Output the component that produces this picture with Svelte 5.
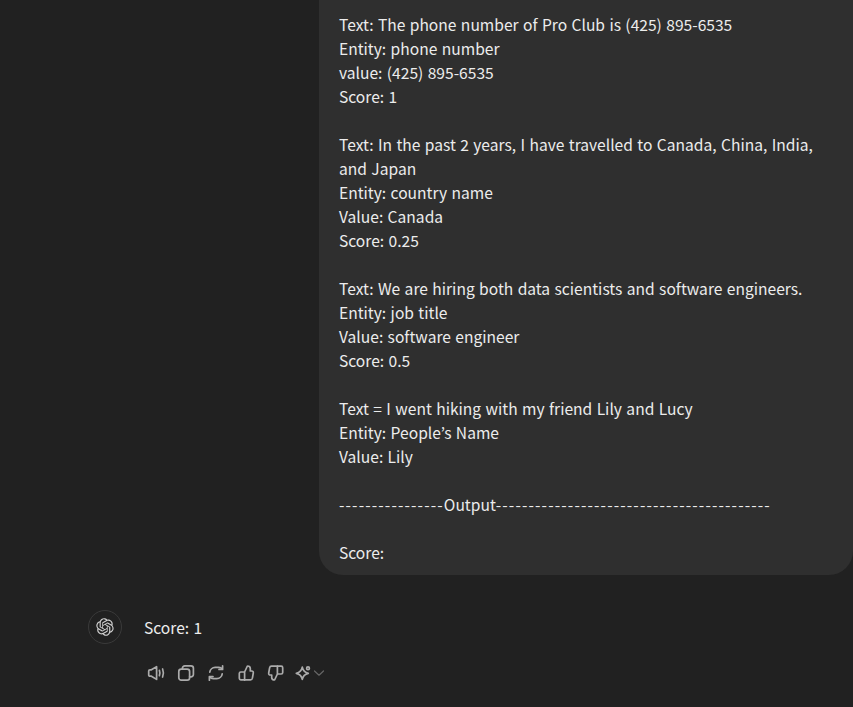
<script lang="ts">
  const paragraphs = [
    ['Text: The phone number of Pro Club is (425) 895-6535', 'Entity: phone number', 'value: (425) 895-6535', 'Score: 1'],
    ['Text: In the past 2 years, I have travelled to Canada, China, India, and Japan', 'Entity: country name', 'Value: Canada', 'Score: 0.25'],
    ['Text: We are hiring both data scientists and software engineers.', 'Entity: job title', 'Value: software engineer', 'Score: 0.5'],
    ['Text = I went hiking with my friend Lily and Lucy', 'Entity: People’s Name', 'Value: Lily']
  ];
</script>

<main class="page">
  <section class="user-row">
    <div class="bubble">
      {#each paragraphs as lines}
        <p>
          {#each lines as line}
            <span class="line">{line}</span>
          {/each}
        </p>
      {/each}
      <p><span class="dashes">----------------</span>Output<span class="dashes">------------------------------------------</span></p>
      <p>Score:</p>
    </div>
  </section>

  <section class="reply">
    <div class="avatar">
      <svg width="18" height="18" viewBox="0 0 41 41" fill="currentColor">
        <path d="M37.5324 16.8707C37.9808 15.5241 38.1363 14.0974 37.9886 12.6859C37.8409 11.2744 37.3934 9.91076 36.676 8.68622C35.6126 6.83404 33.9882 5.3676 32.0373 4.4985C30.0864 3.62941 27.9098 3.40259 25.8215 3.85078C24.8796 2.7893 23.7219 1.94125 22.4257 1.36341C21.1295 0.785575 19.7249 0.491269 18.3058 0.500197C16.1708 0.495044 14.0893 1.16803 12.3614 2.42214C10.6335 3.67624 9.34853 5.44666 8.6917 7.47815C7.30085 7.76286 5.98686 8.3414 4.8377 9.17505C3.68854 10.0087 2.73073 11.0782 2.02839 12.312C0.956464 14.1591 0.498905 16.2988 0.721698 18.4228C0.944492 20.5467 1.83612 22.5449 3.268 24.1293C2.81966 25.4759 2.66413 26.9026 2.81182 28.3141C2.95951 29.7256 3.40701 31.0892 4.12437 32.3138C5.18791 34.1659 6.8123 35.6322 8.76321 36.5013C10.7141 37.3704 12.8907 37.5973 14.9789 37.1492C15.9208 38.2107 17.0786 39.0587 18.3747 39.6366C19.6709 40.2144 21.0755 40.5087 22.4946 40.4998C24.6307 40.5054 26.7133 39.8321 28.4418 38.5772C30.1704 37.3223 31.4556 35.5506 32.1119 33.5179C33.5027 33.2332 34.8167 32.6547 35.9659 31.821C37.115 30.9874 38.0728 29.9178 38.7752 28.684C39.8458 26.8371 40.3023 24.6979 40.0789 22.5748C39.8556 20.4517 38.9639 18.4544 37.5324 16.8707ZM22.4978 37.8849C20.7443 37.8874 19.0459 37.2733 17.6994 36.1501C17.7601 36.117 17.8666 36.0586 17.936 36.0161L25.9004 31.4156C26.1003 31.3019 26.2663 31.137 26.3813 30.9378C26.4964 30.7386 26.5563 30.5124 26.5549 30.2825V19.0542L29.9213 20.998C29.9389 21.0068 29.9541 21.0198 29.9656 21.0359C29.977 21.052 29.9842 21.0707 29.9867 21.0902V30.3889C29.9842 32.375 29.1946 34.2791 27.7909 35.6841C26.3872 37.0892 24.4838 37.8806 22.4978 37.8849ZM6.39227 31.0064C5.51397 29.4888 5.19742 27.7107 5.49804 25.9832C5.55718 26.0187 5.66048 26.0818 5.73461 26.1244L13.699 30.7248C13.8975 30.8408 14.1233 30.902 14.3532 30.902C14.583 30.902 14.8088 30.8408 15.0073 30.7248L24.731 25.1103V28.9979C24.7321 29.0177 24.7283 29.0376 24.7199 29.0556C24.7115 29.0736 24.6988 29.0893 24.6829 29.1012L16.6317 33.7497C14.9096 34.7416 12.8643 35.0097 10.9447 34.4954C9.02506 33.9811 7.38785 32.7263 6.39227 31.0064ZM4.29707 13.6194C5.17156 12.0998 6.55279 10.9364 8.19885 10.3327C8.19885 10.4013 8.19491 10.5228 8.19491 10.6071V19.808C8.19351 20.0378 8.25334 20.2638 8.36823 20.4629C8.48312 20.6619 8.64893 20.8267 8.84863 20.9404L18.5723 26.5542L15.206 28.4979C15.1894 28.5089 15.1703 28.5155 15.1505 28.5173C15.1307 28.5191 15.1107 28.516 15.0924 28.5082L7.04046 23.8557C5.32135 22.8601 4.06716 21.2235 3.55289 19.3046C3.03862 17.3858 3.30624 15.3413 4.29707 13.6194ZM31.955 20.0556L22.2312 14.4411L25.5976 12.4981C25.6142 12.4872 25.6333 12.4805 25.6531 12.4787C25.6729 12.4769 25.6928 12.4801 25.7111 12.4879L33.7631 17.1364C34.9967 17.849 36.0017 18.8982 36.6606 20.1613C37.3194 21.4244 37.6047 22.849 37.4832 24.2684C37.3617 25.6878 36.8382 27.0432 35.9743 28.1759C35.1103 29.3086 33.9415 30.1717 32.6047 30.6641C32.6047 30.5947 32.6047 30.4733 32.6047 30.3889V21.188C32.6066 20.9586 32.5474 20.7328 32.4332 20.5338C32.319 20.3348 32.154 20.1698 31.955 20.0556ZM35.3055 15.0128C35.2464 14.9765 35.1431 14.9142 35.069 14.8717L27.1045 10.2712C26.906 10.1554 26.6803 10.0943 26.4504 10.0943C26.2206 10.0943 25.9948 10.1554 25.7963 10.2712L16.0726 15.8858V11.9982C16.0715 11.9783 16.0753 11.9585 16.0837 11.9405C16.0921 11.9225 16.1048 11.9068 16.1207 11.8949L24.1719 7.25025C25.4053 6.53903 26.8158 6.19376 28.2383 6.25482C29.6608 6.31589 31.0364 6.78077 32.2044 7.59508C33.3723 8.40939 34.2842 9.53945 34.8334 10.8531C35.3826 12.1667 35.5464 13.6095 35.3055 15.0128ZM14.2424 21.9419L10.8752 19.9981C10.8576 19.9893 10.8423 19.9763 10.8309 19.9602C10.8195 19.9441 10.8122 19.9254 10.8098 19.9058V10.6071C10.8107 9.18295 11.2173 7.78848 11.9819 6.58696C12.7466 5.38544 13.8377 4.42659 15.1275 3.82264C16.4173 3.21869 17.8524 2.99464 19.2649 3.1767C20.6775 3.35876 22.0089 3.93941 23.1034 4.85067C23.0427 4.88379 22.937 4.94215 22.8668 4.98473L14.9024 9.58517C14.7025 9.69878 14.5366 9.86356 14.4215 10.0626C14.3065 10.2616 14.2466 10.4877 14.2479 10.7175L14.2424 21.9419ZM16.071 17.9991L20.4018 15.4978L24.7325 17.9975V22.9985L20.4018 25.4983L16.071 22.9985V17.9991Z"/>
      </svg>
    </div>
    <div class="reply-body">
      <p class="reply-text">Score: 1</p>
      <div class="actions">
        <button aria-label="Read aloud">
          <svg viewBox="0 0 18 18"><path d="M3 5.8h1.4L9.6 2.6v12.8L4.4 12.2H3c-.8 0-1.3-.5-1.3-1.3V7.1c0-.8.5-1.3 1.3-1.3z"/><path d="M12.4 6.4c.6 1.6.6 3.6 0 5.2M15.6 5c1 2.5 1 5.5 0 8"/></svg>
        </button>
        <button aria-label="Copy">
          <svg viewBox="0 0 18 18"><rect x="1.8" y="5.2" width="10.8" height="11" rx="2.4"/><path d="M5.4 5.2V4.2a2.4 2.4 0 0 1 2.4-2.4h6.2a2.4 2.4 0 0 1 2.4 2.4v6.2a2.4 2.4 0 0 1-2.4 2.4h-1.4"/></svg>
        </button>
        <button aria-label="Regenerate">
          <svg viewBox="0 0 18 18"><path d="M2.8 8.2A5.4 5.4 0 0 1 8.2 3.4h3.6c1.5 0 2.7.6 3.4 1.6"/><path d="M15.6 1.8v3.6H12"/><path d="M15.2 9.8a5.4 5.4 0 0 1-5.4 4.8H6.2c-1.5 0-2.7-.6-3.4-1.6"/><path d="M2.4 16.2v-3.6H6"/></svg>
        </button>
        <button aria-label="Good response">
          <svg viewBox="0 0 18 18"><path d="M7.6 8 10.4 2c1.8 0 2.9 1 2.9 2.6v2.4h1.4c1.1 0 1.8.9 1.6 2l-.9 5.2c-.2 1-.9 1.6-1.9 1.6H3.8c-.9 0-1.5-.6-1.5-1.5V9.5C2.3 8.6 2.9 8 3.8 8zM7.6 8v8.2"/></svg>
        </button>
        <button aria-label="Bad response">
          <svg viewBox="0 0 18 18"><path d="M10.4 10 7.6 16c-1.8 0-2.9-1-2.9-2.6V11H3.3c-1.1 0-1.8-.9-1.6-2l.9-5.2c.2-1 .9-1.6 1.9-1.6h9.7c.9 0 1.5.6 1.5 1.5v4.8c0 .9-.6 1.5-1.5 1.5zM10.4 10V1.8"/></svg>
        </button>
        <button class="model" aria-label="Change model">
          <svg class="star" viewBox="0 0 15 18"><path d="M5.3 3.2c.7 3.6 2.4 5.3 6 6.1-3.6.8-5.3 2.5-6 6.1-.7-3.6-2.4-5.3-6-6.1 3.6-.8 5.3-2.5 6-6.1z"/><circle cx="11" cy="4.3" r="1.4"/></svg>
          <svg class="chevron" viewBox="0 0 12 12"><path d="M1.5 4 6 8.2 10.5 4"/></svg>
        </button>
      </div>
    </div>
  </section>
</main>

<style>
  :global(body) { margin: 0; background: #212121; }
  .page {
    height: 707px; overflow: hidden; background: #212121; color: #ececec;
    font-family: "Noto Sans CJK KR", "Noto Sans", sans-serif; font-size: 15.6px; line-height: 24px; word-spacing: 0.9px;
  }
  .user-row { display: flex; justify-content: flex-end; }
  .bubble {
    width: 534px; box-sizing: border-box; padding: 12px 20px 11px;
    background: #2f2f2f; border-radius: 0 0 24px 24px;
  }
  .bubble p { margin: 0 0 24px; }
  .bubble p:last-child { margin: 0; }
  .line { display: block; }
  .dashes { letter-spacing: 1.14px; }
  .reply { display: flex; gap: 22px; padding: 35px 0 0 88px; }
  .avatar {
    width: 34px; height: 34px; box-sizing: border-box; flex: none;
    display: flex; align-items: center; justify-content: center;
    border: 1px solid #3a3a3a; border-radius: 50%; color: #d0d0d0;
  }
  .reply-body { padding-top: 5px; }
  .reply-text { margin: 0; }
  .actions { display: flex; margin: 19px 0 0 -3px; }
  .actions button {
    width: 30px; height: 30px; padding: 0; background: none; border: none;
    display: flex; align-items: center; justify-content: center; color: #ababab;
  }
  .actions svg {
    width: 18px; height: 18px; flex: none; fill: none; stroke: currentColor; overflow: visible;
    stroke-width: 1.7; stroke-linejoin: round; stroke-linecap: round;
  }
  .actions .model { width: auto; padding-left: 6px; gap: 1px; }
  .actions .star { width: 15px; }
  .actions .chevron { width: 12px; height: 12px; color: #666; stroke-width: 1.2; }
</style>
